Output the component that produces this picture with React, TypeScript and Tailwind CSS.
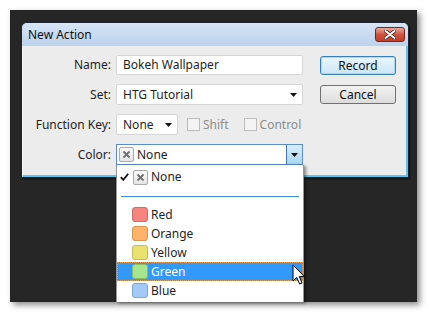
import React from 'react';

const font = { fontFamily: '"Noto Sans", "Liberation Sans", sans-serif' };

const colors = [
  { name: 'Red', fill: 'bg-[#f8847f]', border: 'border-[#d26a66]' },
  { name: 'Orange', fill: 'bg-[#fdb469]', border: 'border-[#d99550]' },
  { name: 'Yellow', fill: 'bg-[#e9e26f]', border: 'border-[#c2bc55]' },
  { name: 'Green', fill: 'bg-[#a9e58c]', border: 'border-[#86c06c]', active: true },
  { name: 'Blue', fill: 'bg-[#a3c9f6]', border: 'border-[#7ea6d6]' },
];

function NoneBox() {
  return (
    <span className="flex h-[15px] w-[15px] items-center justify-center rounded-[2px] border border-[#a9a9a9] bg-gradient-to-b from-[#fbfbfb] to-[#e6e6e6]">
      <svg width="9" height="9" viewBox="0 0 9 9">
        <path d="M1.5 1.5 L7.5 7.5 M7.5 1.5 L1.5 7.5" stroke="#6f6f6f" strokeWidth="1.8" />
      </svg>
    </span>
  );
}

function Arrow() {
  return (
    <svg width="7" height="4" viewBox="0 0 7 4">
      <path d="M0 0 H7 L3.5 4 Z" fill="#111" />
    </svg>
  );
}

function Checkbox({ label }: { label: string }) {
  return (
    <div className="flex items-center gap-[3px] text-[#8d8d8d]">
      <span className="h-[13px] w-[13px] border border-[#bcbcbc] bg-[#f4f4f4]" />
      <span>{label}</span>
    </div>
  );
}

export default function App() {
  return (
    <div
      className="relative h-[313px] w-[428px] overflow-hidden bg-white pl-[10px] pt-[10px] text-[12px] text-[#1e1e1e]"
      style={font}
    >
      <div className="h-[292px] w-[407px] bg-[#262626] pl-[11px] pt-[12px] shadow-[3px_3px_6px_rgba(0,0,0,0.45)]">
        {/* Dialog */}
        <div className="flex h-[156px] w-[388px] flex-col rounded-t-[6px] border border-[#1b2430] bg-[#bcd3ee] shadow-[1px_1px_2px_rgba(0,0,0,0.6)]">
          <div className="flex h-[23px] items-center justify-between rounded-t-[5px] bg-gradient-to-b from-[#d6e5f5] to-[#bcd2ec] pl-[6px] pr-[3px]">
            <span className="text-[12px] text-[#111]">New Action</span>
            <div className="flex h-[15px] w-[30px] items-center justify-center rounded-[3px] border border-[#6b2a22] bg-gradient-to-b from-[#e9a99c] via-[#d0533f] to-[#c23d28]">
              <svg width="12" height="9" viewBox="0 0 12 9">
                <path d="M1.5 1 L10.5 8 M10.5 1 L1.5 8" stroke="#3a1a16" strokeWidth="3.4" strokeLinecap="round" />
                <path d="M1.5 1 L10.5 8 M10.5 1 L1.5 8" stroke="#fff" strokeWidth="2" strokeLinecap="round" />
              </svg>
            </div>
          </div>
          <div className="flex flex-1 items-start border-b-2 border-l border-r-2 border-b-[#5ec3ec] border-l-[#f7f7f7] border-r-[#5ec3ec] bg-[#ececec] pt-[9px]">
            <div className="grid grid-cols-[88px_auto] content-start gap-x-[5px] gap-y-[9px]">
              <div className="flex h-[20px] items-center justify-end">Name:</div>
              <div className="flex h-[20px] w-[187px] items-center rounded-[2px] border border-[#d5d5d5] bg-white px-[6px]">
                Bokeh Wallpaper
              </div>
              <div className="flex h-[21px] items-center justify-end">Set:</div>
              <div className="flex h-[21px] w-[187px] items-center justify-between rounded-[2px] border border-[#d5d5d5] bg-white pl-[6px] pr-[5px]">
                <span>HTG Tutorial</span>
                <Arrow />
              </div>
              <div className="flex h-[21px] items-center justify-end">Function Key:</div>
              <div className="flex h-[21px] items-center gap-[9px]">
                <div className="flex h-[21px] w-[62px] items-center justify-between rounded-[2px] border border-[#d5d5d5] bg-white pl-[6px] pr-[5px]">
                  <span>None</span>
                  <Arrow />
                </div>
                <div className="flex items-center gap-[15px]">
                  <Checkbox label="Shift" />
                  <Checkbox label="Control" />
                </div>
              </div>
              <div className="flex h-[21px] items-center justify-end">Color:</div>
              <div className="flex h-[21px] w-[187px] items-center border border-[#5b8fc4] bg-white">
                <div className="flex flex-1 items-center gap-[3px] pl-[2px]">
                  <NoneBox />
                  <span>None</span>
                </div>
                <div className="flex h-full w-[16px] items-center justify-center border-l border-[#3c7fb1] bg-gradient-to-b from-[#d9effa] to-[#a6d6f0]">
                  <Arrow />
                </div>
              </div>
            </div>
            <div className="ml-[17px] mt-[1px] flex flex-col gap-[10px]">
              <button className="h-[19px] w-[76px] rounded-[3px] border border-[#3c7fb1] bg-gradient-to-b from-[#eaf6fd] to-[#cbe6f6] leading-none shadow-[0_0_0_1px_#9cdcf7_inset] text-[#111]">
                Record
              </button>
              <button className="h-[19px] w-[76px] rounded-[3px] border border-[#707070] bg-gradient-to-b from-[#f3f3f3] to-[#dcdcdc] leading-none text-[#111]">
                Cancel
              </button>
            </div>
          </div>
        </div>
      </div>

      {/* Popup list */}
      <div className="absolute left-[116px] top-[165px] h-[137px] w-[188px] border-x border-[#979797] bg-white shadow-[2px_1px_3px_rgba(0,0,0,0.45)]">
        <div className="mt-[2px] flex h-[20px] items-center pl-[3px]">
          <svg width="9" height="8" viewBox="0 0 9 8" className="mr-[4px]">
            <path d="M0.8 4.2 L3.3 6.8 L8.2 0.8" stroke="#111" strokeWidth="1.8" fill="none" />
          </svg>
          <NoneBox />
          <span className="ml-[3px]">None</span>
        </div>
        <div className="flex h-[18px] items-center px-[4px]">
          <div className="h-px w-full bg-[#3d8fd1]" />
        </div>
        {colors.map((c) => (
          <div
            key={c.name}
            className={
              c.active
                ? 'flex h-[19px] items-center border border-dotted border-[#e0a060] bg-[#3399ff] pl-[14px] text-white'
                : 'flex h-[19px] items-center border border-transparent pl-[14px]'
            }
          >
            <span className={`h-[15px] w-[16px] rounded-[3px] border ${c.fill} ${c.border}`} />
            <span className="ml-[3px]">{c.name}</span>
          </div>
        ))}
      </div>

      {/* Mouse cursor */}
      <svg className="absolute left-[292px] top-[264px]" width="14" height="23" viewBox="0 0 14 23">
        <path
          d="M1 1 L1 17 L4.8 13.4 L7.6 20 L10 19 L7.3 12.6 L12.5 12.6 Z"
          fill="#fff"
          stroke="#000"
          strokeWidth="1"
          strokeLinejoin="miter"
        />
      </svg>
    </div>
  );
}
